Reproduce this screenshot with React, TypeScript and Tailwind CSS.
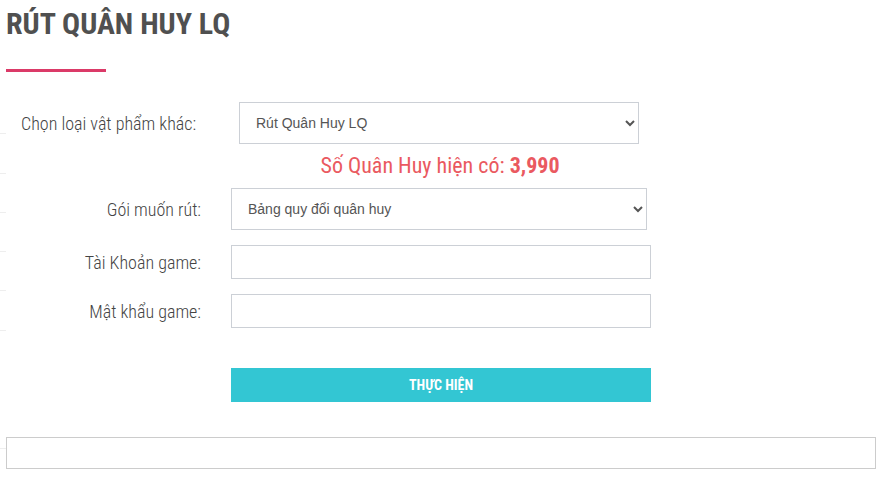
import React from "react";

const cond = "font-['Roboto_Condensed','Roboto',sans-serif]";

function EdgeLines() {
  // faint leftover row lines at the very left edge
  const gaps = [133, 39, 38, 38, 38, 39, 117];
  return (
    <div className="flex w-[6px] shrink-0 flex-col">
      {gaps.map((g, i) => (
        <div key={i} className="border-b border-[#eeeeee]" style={{ marginTop: g }} />
      ))}
    </div>
  );
}

function Row({ label, children }: { label: string; children: React.ReactNode }) {
  return (
    <div className="flex items-center">
      <label className={`w-[225px] pr-[30px] text-right text-[18px] font-light text-[#444] ${cond}`}>
        {label}
      </label>
      {children}
    </div>
  );
}

export default function App() {
  return (
    <div className="flex min-h-[484px] bg-white">
      <EdgeLines />
      <div className="w-[870px]">
        <h1 className={`pt-[7px] text-[30px] font-bold leading-[34px] text-[#505050] ${cond}`}>
          RÚT QUÂN HUY LQ
        </h1>
        <div className="mt-[28px] h-[3px] w-[100px] bg-[#db3a68]" />

        <div className="mt-[30px] flex items-center">
          <label className={`w-[233px] pl-[15px] text-[18px] font-light text-[#444] ${cond}`}>
            Chọn loại vật phẩm khác:
          </label>
          <select className="h-[42px] w-[400px] border border-[#ccd0d6] bg-white px-[12px] font-['Liberation_Sans',Arial,sans-serif] text-[14px] text-[#555]">
            <option>Rút Quân Huy LQ</option>
          </select>
        </div>

        <div className={`mt-[9px] w-[868px] text-center text-[22px] leading-[26px] text-[#ea5960] ${cond}`}>
          Số Quân Huy hiện có: <b className="font-bold">3,990</b>
        </div>

        <div className="mt-[9px] flex flex-col gap-[15px]">
          <Row label="Gói muốn rút:">
            <select className="h-[42px] w-[416px] border border-[#ccd0d6] bg-white px-[12px] font-['Liberation_Sans',Arial,sans-serif] text-[14px] text-[#555]">
              <option>Bảng quy đổi quân huy</option>
            </select>
          </Row>
          <Row label="Tài Khoản game:">
            <input className="h-[34px] w-[420px] border border-[#ccd0d6] bg-white px-[12px] text-[14px]" />
          </Row>
          <Row label="Mật khẩu game:">
            <input type="password" className="h-[34px] w-[420px] border border-[#ccd0d6] bg-white px-[12px] text-[14px]" />
          </Row>
        </div>

        <div className="mt-[40px] flex">
          <div className="w-[225px]" />
          <button className={`h-[34px] w-[420px] bg-[#33c6d3] text-[14px] font-bold text-white ${cond}`}>
            THỰC HIỆN
          </button>
        </div>

        <div className="mt-[35px] h-[32px] w-[870px] border border-[#cccccc]" />
      </div>
    </div>
  );
}
